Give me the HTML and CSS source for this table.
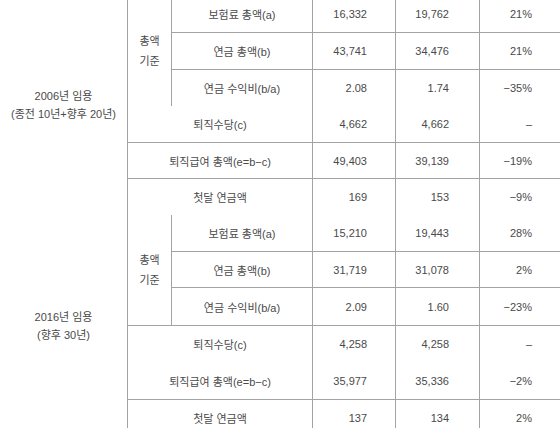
FILE: index.html
```html
<!DOCTYPE html>
<html lang="ko">
<head>
<meta charset="utf-8">
<title>임용 시기별 연금 비교</title>
<link rel="stylesheet" href="styles.css">
</head>
<body>
<div class="sheet">
  <div class="grp g1">2006년 임용<br>(종전 10년+향후 20년)</div>
  <div class="sub s1">총액<br>기준</div>
  <div class="lab r1">보험료 총액(a)</div>
  <div class="num c4 r1">16,332</div>
  <div class="num c5 r1">19,762</div>
  <div class="num c6 r1">21%</div>

  <div class="lab r2 t">연금 총액(b)</div>
  <div class="num c4 r2 t">43,741</div>
  <div class="num c5 r2 t">34,476</div>
  <div class="num c6 r2 t">21%</div>

  <div class="lab r3 t">연금 수익비(b/a)</div>
  <div class="num c4 r3 t">2.08</div>
  <div class="num c5 r3 t">1.74</div>
  <div class="num c6 r3 t">−35%</div>

  <div class="lab wide r4">퇴직수당(c)</div>
  <div class="num c4 r4">4,662</div>
  <div class="num c5 r4">4,662</div>
  <div class="num c6 r4">–</div>

  <div class="lab wide r5 t">퇴직급여 총액(e=b−c)</div>
  <div class="num c4 r5 t">49,403</div>
  <div class="num c5 r5 t">39,139</div>
  <div class="num c6 r5 t">−19%</div>

  <div class="lab wide r6 t">첫달 연금액</div>
  <div class="num c4 r6 t">169</div>
  <div class="num c5 r6 t">153</div>
  <div class="num c6 r6 t">−9%</div>

  <div class="grp g2">2016년 임용<br>(향후 30년)</div>
  <div class="sub s2">총액<br>기준</div>
  <div class="lab r7">보험료 총액(a)</div>
  <div class="num c4 r7">15,210</div>
  <div class="num c5 r7">19,443</div>
  <div class="num c6 r7">28%</div>

  <div class="lab r8 t">연금 총액(b)</div>
  <div class="num c4 r8 t">31,719</div>
  <div class="num c5 r8 t">31,078</div>
  <div class="num c6 r8 t">2%</div>

  <div class="lab r9 t">연금 수익비(b/a)</div>
  <div class="num c4 r9 t">2.09</div>
  <div class="num c5 r9 t">1.60</div>
  <div class="num c6 r9 t">−23%</div>

  <div class="lab wide r10 t">퇴직수당(c)</div>
  <div class="num c4 r10 t">4,258</div>
  <div class="num c5 r10 t">4,258</div>
  <div class="num c6 r10 t">–</div>

  <div class="lab wide r11">퇴직급여 총액(e=b−c)</div>
  <div class="num c4 r11">35,977</div>
  <div class="num c5 r11">35,336</div>
  <div class="num c6 r11">−2%</div>

  <div class="lab wide r12 t">첫달 연금액</div>
  <div class="num c4 r12 t">137</div>
  <div class="num c5 r12 t">134</div>
  <div class="num c6 r12 t">2%</div>
</div>
</body>
</html>
```
FILE: styles.css
```css
html, body {
  margin: 0;
  padding: 0;
  background: #ffffff;
  overflow: hidden;
}
.sheet {
  margin-top: -5px;
  width: 560px;
  display: grid;
  grid-template-columns: 127px 44px 141px 83px 84px 81px;
  grid-template-rows: 37px 37px 37px 36px 36px 37px 36px 36px 38px 37px 37px 37px;
  font-family: "Liberation Sans", "Noto Sans CJK KR", sans-serif;
  font-size: 11px;
  color: #4a4a4a;
}
.sheet > div {
  box-sizing: border-box;
  display: flex;
  align-items: center;
}
.grp {
  grid-column: 1;
  justify-content: center;
  text-align: center;
  line-height: 18px;
}
.g1 { grid-row: 1 / 7; }
.g2 { grid-row: 7 / 13; }
.sub {
  grid-column: 2;
  justify-content: center;
  text-align: center;
  line-height: 20px;
  border-left: 1px solid #a3a3a3;
}
.s1 { grid-row: 1 / 4; }
.s2 { grid-row: 7 / 10; }
.lab {
  grid-column: 3;
  justify-content: center;
  border-left: 1px solid #a3a3a3;
}
.lab.wide { grid-column: 2 / 4; }
.num {
  justify-content: flex-end;
  border-left: 1px solid #a3a3a3;
}
.c4 { grid-column: 4; padding-right: 28px; }
.c5 { grid-column: 5; padding-right: 30px; }
.c6 { grid-column: 6; padding-right: 28px; }
.t { border-top: 1px solid #a3a3a3; }
.r1 { grid-row: 1; }
.r2 { grid-row: 2; }
.r3 { grid-row: 3; }
.r4 { grid-row: 4; }
.r5 { grid-row: 5; }
.r6 { grid-row: 6; }
.r7 { grid-row: 7; }
.r8 { grid-row: 8; }
.r9 { grid-row: 9; }
.r10 { grid-row: 10; }
.r11 { grid-row: 11; }
.r12 { grid-row: 12; }
```
